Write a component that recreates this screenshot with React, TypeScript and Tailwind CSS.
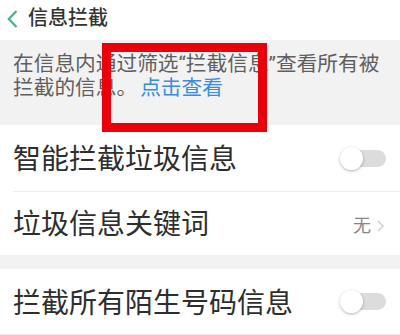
import React from "react";

function Toggle() {
  return (
    <div className="relative w-[46px] h-[24px] flex items-center">
      <div className="absolute left-[5px] right-0 h-[17px] rounded-full bg-[#dcdcdc]" />
      <div className="absolute left-0 w-[23px] h-[23px] rounded-full bg-white shadow-[0_1px_3px_rgba(0,0,0,0.3)]" />
    </div>
  );
}

export default function App() {
  return (
    <div
      className="relative w-[400px] h-[335px] bg-white overflow-hidden"
      style={{ fontFamily: 'Roboto, "Noto Sans CJK SC", sans-serif' }}
    >
      <div className="h-[40px] flex items-center pl-[7px]">
        <svg width="11" height="18" viewBox="0 0 11 18" className="mr-[10px] -mt-[3px]">
          <path d="M9.5 1 L1.8 9 L9.5 17" fill="none" stroke="#3cb48a" strokeWidth="2.2" />
        </svg>
        <span className="text-[20px] font-medium leading-none text-[#333] -mt-[4px]">信息拦截</span>
      </div>
      <div className="h-[85px] bg-[#f2f2f2] pl-[13px] pt-[12px] text-[20.7px] leading-[24px] text-[#5f5f5f]">
        在信息内通过筛选“拦截信息”查看所有被
        <br />
        拦截的信息。<span className="text-[#3a8ce0] ml-[3px]">点击查看</span>
      </div>
      <div className="h-[66px] flex items-center justify-between pl-[13px] pr-[14px]">
        <span className="text-[28px] text-[#2e2e2e] leading-none mt-[3px]">智能拦截垃圾信息</span>
        <Toggle />
      </div>
      <div className="ml-[13px] h-px bg-[#ececec]" />
      <div className="h-[63px] flex items-center justify-between pl-[13px] pr-[16px]">
        <span className="text-[28px] text-[#2e2e2e] leading-none mt-[3px]">垃圾信息关键词</span>
        <div className="flex items-center gap-[6px] mt-[4px]">
          <span className="text-[18px] text-[#888] leading-none">无</span>
          <svg width="7" height="12" viewBox="0 0 7 12">
            <path d="M1 1 L6 6 L1 11" fill="none" stroke="#c8c8c8" strokeWidth="1.3" />
          </svg>
        </div>
      </div>
      <div className="h-[14px] bg-[#f2f2f2]" />
      <div className="h-[65px] flex items-center justify-between pl-[13px] pr-[14px]">
        <span className="text-[28px] text-[#2e2e2e] leading-none mt-[4px]">拦截所有陌生号码信息</span>
        <Toggle />
      </div>
      <div className="h-px bg-[#ececec]" />
      <div className="absolute left-[102px] top-[43px] w-[165px] h-[89px] border-[9px] border-[#e8000b]" />
    </div>
  );
}
